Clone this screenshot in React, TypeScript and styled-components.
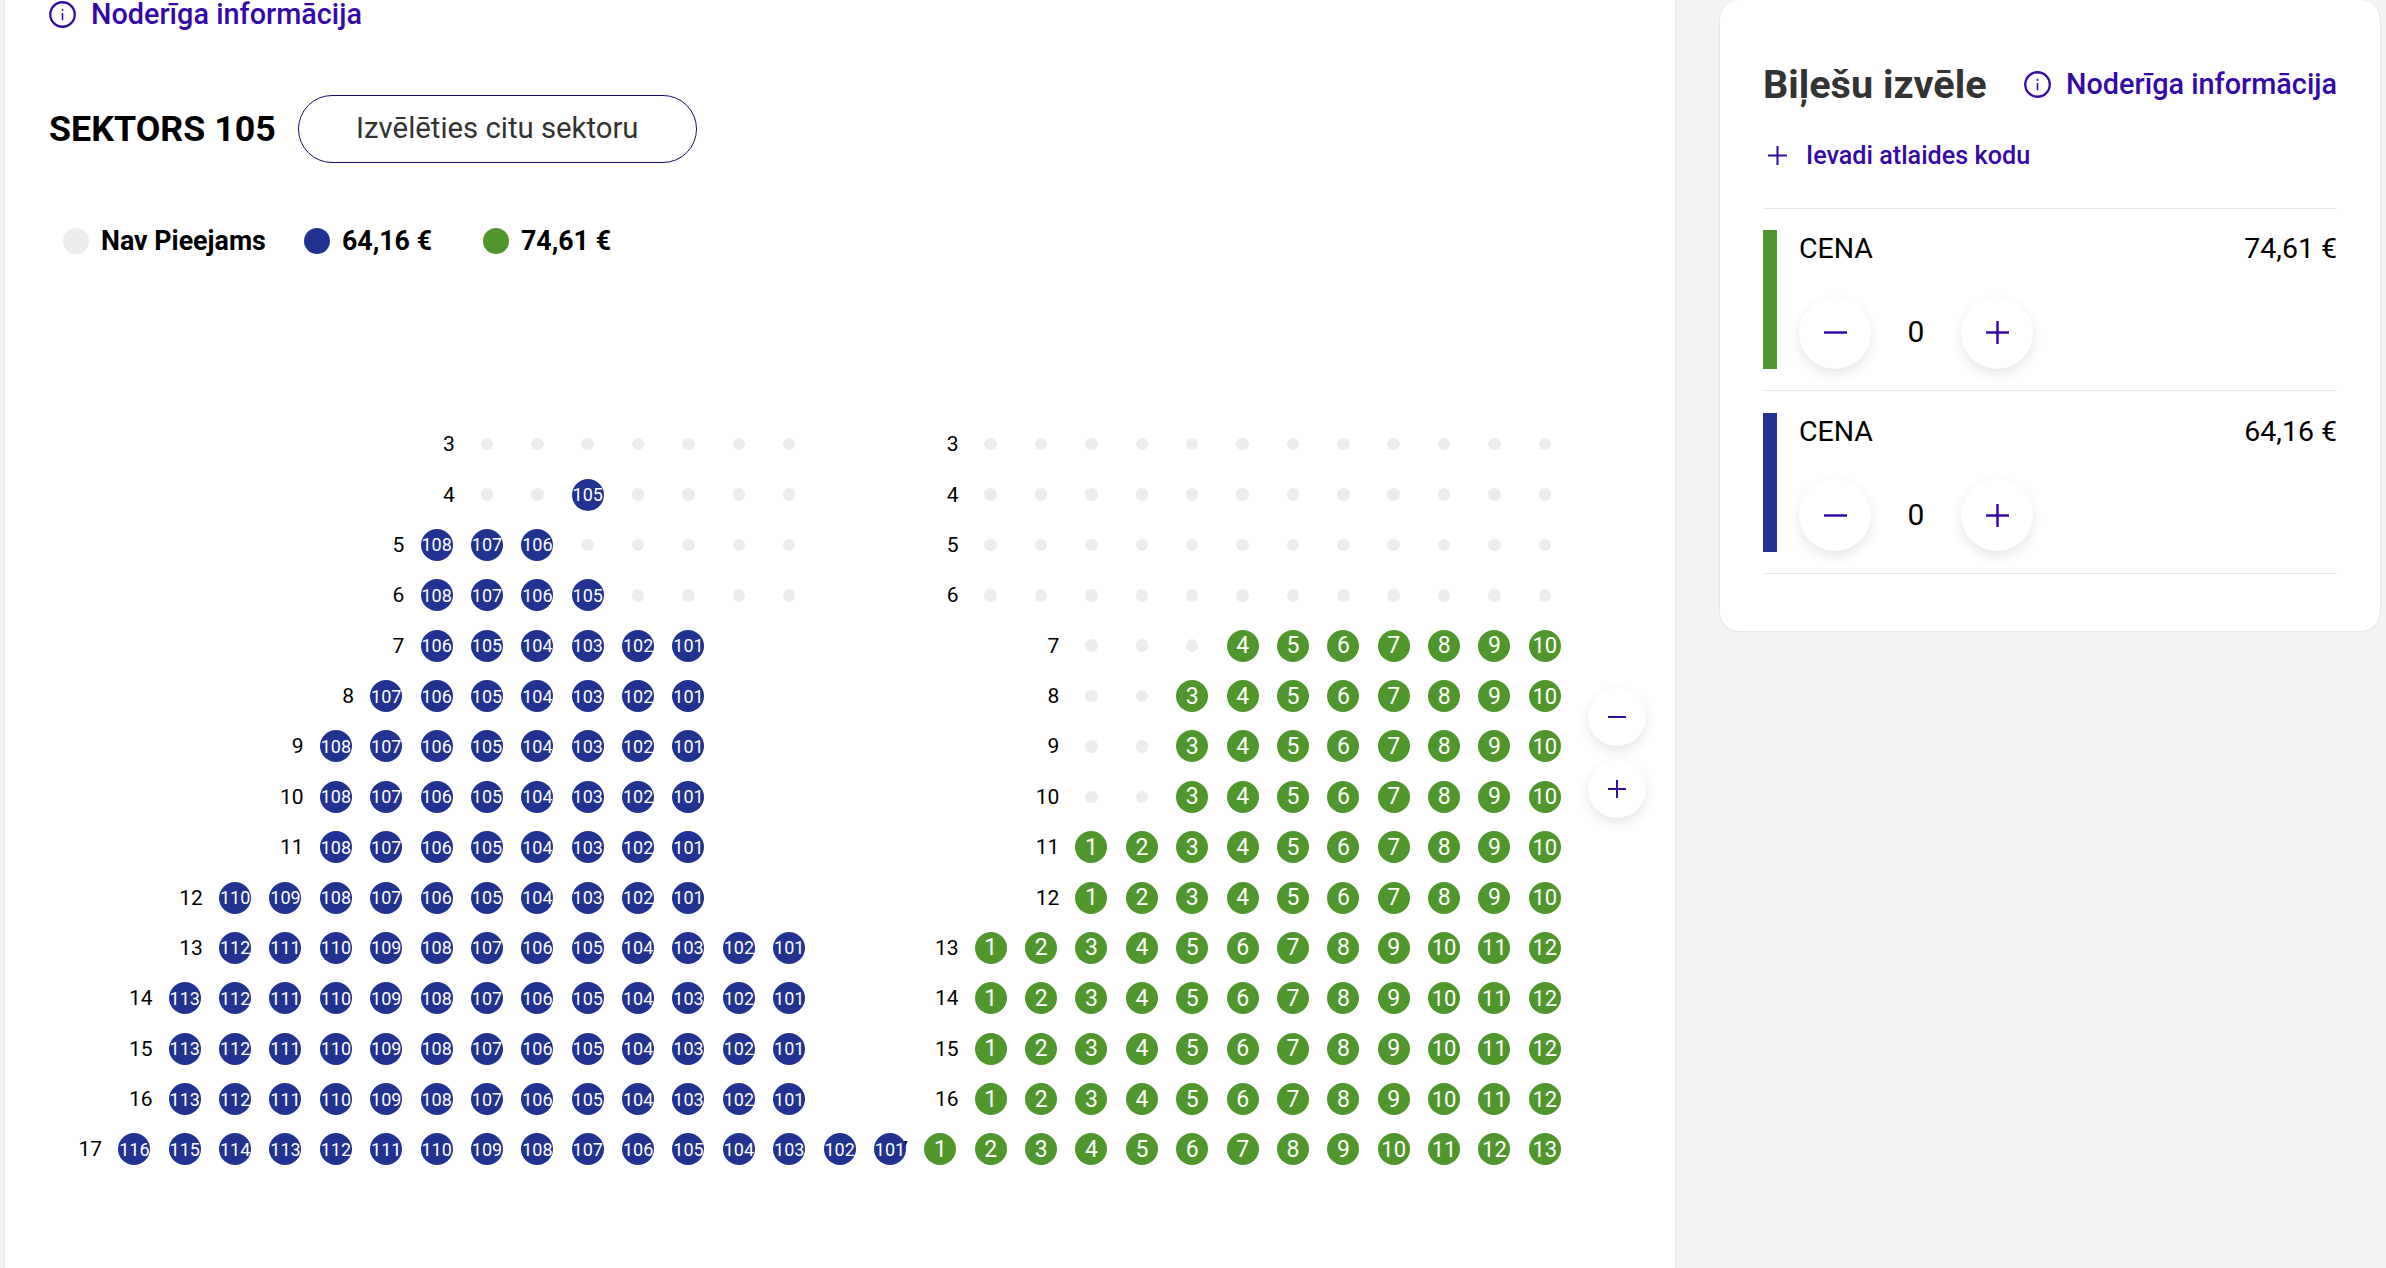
import * as React from 'react';
import styled, { createGlobalStyle } from 'styled-components';

const GlobalStyle = createGlobalStyle`
  html, body {
    margin: 0;
    padding: 0;
    background: #f3f3f6;
    font-family: Roboto, "Liberation Sans", sans-serif;
  }
`;

const BLUE = '#223291';
const GREEN = '#4f972d';
const OFF = '#ececec';
const LINK = '#3409a8';

type Kind = 'off' | 'blue' | 'green';
type Block = { kind: Kind; col: number; count: number; first?: number };
type SeatRow = { row: number; blocks: Block[]; labels: number[] };

const off = (col: number, count: number): Block => ({ kind: 'off', col, count });
const blue = (col: number, first: number): Block => ({ kind: 'blue', col, count: first - 100, first });
const green = (col: number, count: number, first = 1): Block => ({ kind: 'green', col, count, first });

const RIGHT_OFF = off(17, 12);

const ROWS: SeatRow[] = [
  { row: 3, labels: [7, 17], blocks: [off(7, 7), RIGHT_OFF] },
  { row: 4, labels: [7, 17], blocks: [off(7, 2), { kind: 'blue', col: 9, count: 1, first: 105 }, off(10, 4), RIGHT_OFF] },
  { row: 5, labels: [6, 17], blocks: [{ kind: 'blue', col: 6, count: 3, first: 108 }, off(9, 5), RIGHT_OFF] },
  { row: 6, labels: [6, 17], blocks: [{ kind: 'blue', col: 6, count: 4, first: 108 }, off(10, 4), RIGHT_OFF] },
  { row: 7, labels: [6, 19], blocks: [blue(6, 106), off(19, 3), green(22, 7, 4)] },
  { row: 8, labels: [5, 19], blocks: [blue(5, 107), off(19, 2), green(21, 8, 3)] },
  { row: 9, labels: [4, 19], blocks: [blue(4, 108), off(19, 2), green(21, 8, 3)] },
  { row: 10, labels: [4, 19], blocks: [blue(4, 108), off(19, 2), green(21, 8, 3)] },
  { row: 11, labels: [4, 19], blocks: [blue(4, 108), green(19, 10)] },
  { row: 12, labels: [2, 19], blocks: [blue(2, 110), green(19, 10)] },
  { row: 13, labels: [2, 17], blocks: [blue(2, 112), green(17, 12)] },
  { row: 14, labels: [1, 17], blocks: [blue(1, 113), green(17, 12)] },
  { row: 15, labels: [1, 17], blocks: [blue(1, 113), green(17, 12)] },
  { row: 16, labels: [1, 17], blocks: [blue(1, 113), green(17, 12)] },
  { row: 17, labels: [0, 16], blocks: [blue(0, 116), green(16, 13)] },
];

const Page = styled.div`
  display: flex;
  height: 1268px;
  overflow: hidden;
  padding-left: 4px;
`;

const Main = styled.main`
  position: relative;
  width: 1672px;
  box-sizing: border-box;
  padding-left: 44px;
  background: #fff;
  border-left: 1px solid #e6e6ea;
  border-right: 1px solid #e4e4e8;
`;

const InfoLink = styled.a`
  display: flex;
  align-items: center;
  gap: 15px;
  padding-top: 1px;
  color: ${LINK};
  font-size: 28.8px;
  font-weight: 500;
  line-height: 27px;
  white-space: nowrap;
`;

const TitleRow = styled.div`
  display: flex;
  align-items: center;
  gap: 22px;
  margin-top: 67px;
`;

const SectorTitle = styled.h1`
  margin: 0;
  color: #000;
  font-size: 35.8px;
  font-weight: 700;
`;

const OutlineButton = styled.button`
  width: 399px;
  height: 68px;
  padding: 0 0 3px;
  border: 1.5px solid #1a0868;
  border-radius: 34px;
  background: #fff;
  color: #333;
  font-family: inherit;
  font-size: 29.3px;
`;

const Legend = styled.div`
  display: flex;
  gap: 38px;
  margin-top: 64.5px;
  padding-left: 14px;
`;

const LegendItem = styled.div`
  display: flex;
  align-items: center;
  gap: 12px;
  min-width: 141px;
  height: 26px;
  color: #000;
  font-size: 26.8px;
  font-weight: 700;
  white-space: nowrap;
`;

const LegendDot = styled.span<{ $color: string }>`
  width: 26px;
  height: 26px;
  border-radius: 50%;
  background: ${(p) => p.$color};
`;

const SeatMap = styled.div`
  margin: 165.5px 0 0 9.8px;
`;

const MapRow = styled.div`
  display: grid;
  grid-template-columns: repeat(30, 50.38px);
  height: 50.38px;
  align-items: center;
`;

const RowLabel = styled.span<{ $col: number }>`
  grid-column: ${(p) => p.$col + 1};
  grid-row: 1;
  padding-right: 7px;
  color: #000;
  font-size: 21px;
  text-align: right;
`;

const SEAT_FONT: Record<number, number> = { 1: 23, 2: 22, 3: 18 };

const Seat = styled.span<{ $col: number; $color: string; $digits: number }>`
  position: relative;
  grid-column: ${(p) => p.$col + 1};
  grid-row: 1;
  justify-self: center;
  display: flex;
  align-items: center;
  justify-content: center;
  width: 32px;
  height: 32px;
  border-radius: 50%;
  background: ${(p) => p.$color};
  color: #fff;
  font-size: ${(p) => SEAT_FONT[p.$digits]}px;
  font-weight: 400;
`;

const OffSeat = styled.span<{ $col: number }>`
  grid-column: ${(p) => p.$col + 1};
  grid-row: 1;
  justify-self: center;
  width: 12.5px;
  height: 12.5px;
  border-radius: 50%;
  background: ${OFF};
`;

const ZoomControls = styled.div`
  position: absolute;
  top: 688px;
  right: 29px;
  display: flex;
  flex-direction: column;
  gap: 14px;
`;

const RoundButton = styled.button<{ $size: number }>`
  display: flex;
  align-items: center;
  justify-content: center;
  width: ${(p) => p.$size}px;
  height: ${(p) => p.$size}px;
  padding: 0;
  border: none;
  border-radius: 50%;
  background: #fff;
  box-shadow: 0 5px 12px rgba(0, 0, 0, 0.1);
  color: ${LINK};
`;

const Side = styled.aside`
  padding-left: 43px;
`;

const Card = styled.section`
  width: 662px;
  height: 632px;
  box-sizing: border-box;
  padding: 64px 43px 0;
  background: #fff;
  border: 1px solid #e6e6ea;
  border-top: none;
  border-radius: 20px;
`;

const CardHeader = styled.div`
  display: flex;
  align-items: center;
  justify-content: space-between;
  height: 40px;
`;

const CardTitle = styled.h2`
  margin: 0;
  color: #333;
  font-size: 39.6px;
  font-weight: 700;
  white-space: nowrap;
`;

const DiscountRow = styled.a`
  display: flex;
  align-items: center;
  gap: 19px;
  height: 36px;
  margin: 33px 0 35px;
  padding-left: 5px;
  color: ${LINK};
  font-size: 25.2px;
  font-weight: 500;
`;

const Ticket = styled.div`
  display: flex;
  gap: 22px;
  padding: 21px 0;
  border-top: 1px solid #e4e4e8;

  & + & {
    padding-top: 21.5px;
  }

  &:last-child {
    border-bottom: 1px solid #e4e4e8;
  }
`;

const PriceBar = styled.div<{ $color: string }>`
  width: 14px;
  height: 139px;
  background: ${(p) => p.$color};
`;

const TicketBody = styled.div`
  flex: 1;
`;

const TicketHead = styled.div`
  display: flex;
  justify-content: space-between;
  padding-top: 1px;
  color: #000;
  font-size: 28.5px;
  line-height: 36px;
`;

const Stepper = styled.div`
  display: flex;
  align-items: center;
  margin-top: 29.5px;
`;

const Count = styled.span`
  width: 90px;
  padding-bottom: 2px;
  color: #000;
  font-size: 30px;
  text-align: center;
`;

const InfoIcon = ({ size }: { size: number }) => (
  <svg width={size} height={size} viewBox="0 0 26 26" fill="none" stroke="currentColor">
    <circle cx="13" cy="13" r="11.8" strokeWidth="2.2" />
    <path d="M13 11.5v7" strokeWidth="1.5" />
    <path d="M13 7.5v2" strokeWidth="1.5" />
  </svg>
);

const PlusIcon = ({ size }: { size: number }) => (
  <svg width={size} height={size} viewBox="0 0 24 24" fill="none" stroke="currentColor" strokeWidth="2.6">
    <path d="M0 12h24M12 0v24" />
  </svg>
);

const MinusIcon = ({ size }: { size: number }) => (
  <svg width={size} height={size} viewBox="0 0 24 24" fill="none" stroke="currentColor" strokeWidth="2.6">
    <path d="M0 12h24" />
  </svg>
);

const renderBlock = (block: Block) => {
  const seats = Array.from({ length: block.count }, (_, i) => block.col + i);

  if (block.kind === 'off') {
    return seats.map((col) => <OffSeat key={col} $col={col} />);
  }

  return seats.map((col, i) => {
    // blue numbers count down, green ones count up
    const num = block.kind === 'blue' ? block.first! - i : block.first! + i;
    return (
      <Seat
        key={col}
        $col={col}
        $color={block.kind === 'blue' ? BLUE : GREEN}
        $digits={String(num).length}
      >
        {num}
      </Seat>
    );
  });
};

const TicketRow = ({ color, price }: { color: string; price: string }) => (
  <Ticket>
    <PriceBar $color={color} />
    <TicketBody>
      <TicketHead>
        <span>CENA</span>
        <span>{price}</span>
      </TicketHead>
      <Stepper>
        <RoundButton $size={72}>
          <MinusIcon size={23} />
        </RoundButton>
        <Count>0</Count>
        <RoundButton $size={72}>
          <PlusIcon size={23} />
        </RoundButton>
      </Stepper>
    </TicketBody>
  </Ticket>
);

const App: React.FC = () => (
  <Page>
    <GlobalStyle />
    <Main>
      <InfoLink>
        <InfoIcon size={27} />
        Noderīga informācija
      </InfoLink>
      <TitleRow>
        <SectorTitle>SEKTORS 105</SectorTitle>
        <OutlineButton>Izvēlēties citu sektoru</OutlineButton>
      </TitleRow>
      <Legend>
        <LegendItem>
          <LegendDot $color={OFF} />
          Nav Pieejams
        </LegendItem>
        <LegendItem>
          <LegendDot $color={BLUE} />
          64,16 €
        </LegendItem>
        <LegendItem>
          <LegendDot $color={GREEN} />
          74,61 €
        </LegendItem>
      </Legend>
      <SeatMap>
        {ROWS.map(({ row, blocks, labels }) => (
          <MapRow key={row}>
            {labels.map((col) => (
              <RowLabel key={col} $col={col}>
                {row}
              </RowLabel>
            ))}
            {blocks.map((block) => (
              <React.Fragment key={block.col}>
                {renderBlock({ ...block, col: block.col + 1 })}
              </React.Fragment>
            ))}
          </MapRow>
        ))}
      </SeatMap>
      <ZoomControls>
        <RoundButton $size={58}>
          <MinusIcon size={18} />
        </RoundButton>
        <RoundButton $size={58}>
          <PlusIcon size={18} />
        </RoundButton>
      </ZoomControls>
    </Main>
    <Side>
      <Card>
        <CardHeader>
          <CardTitle>Biļešu izvēle</CardTitle>
          <InfoLink>
            <InfoIcon size={27} />
            Noderīga informācija
          </InfoLink>
        </CardHeader>
        <DiscountRow>
          <PlusIcon size={19} />
          Ievadi atlaides kodu
        </DiscountRow>
        <TicketRow color={GREEN} price="74,61 €" />
        <TicketRow color={BLUE} price="64,16 €" />
      </Card>
    </Side>
  </Page>
);

export default App;
